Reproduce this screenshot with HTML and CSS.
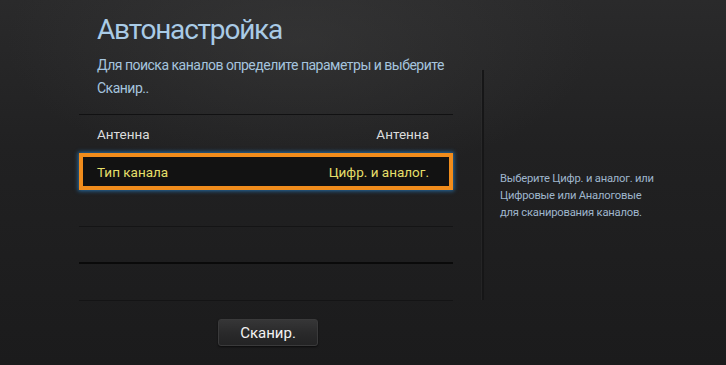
FILE: index.html
```html
<!DOCTYPE html>
<html lang="ru">
<head>
<meta charset="utf-8">
<link rel="stylesheet" href="styles.css">
</head>
<body>
<div class="screen">
  <div class="main">
    <h1 class="title">Автонастройка</h1>
    <p class="desc">Для поиска каналов определите параметры и выберите Сканир..</p>
    <div class="list">
      <div class="row row-first"><span>Антенна</span><span>Антенна</span></div>
      <div class="row row-active"><span>Тип канала</span><span>Цифр. и аналог.</span></div>
      <div class="row row-empty"></div>
      <div class="row row-empty row-dark"></div>
      <div class="row row-empty"></div>
    </div>
    <div class="actions"><button class="btn">Сканир.</button></div>
  </div>
  <div class="side">
    <p class="hint">Выберите Цифр. и аналог. или<br>Цифровые или Аналоговые<br>для сканирования каналов.</p>
  </div>
</div>
</body>
</html>
```
FILE: styles.css
```css
html, body {
  margin: 0;
  padding: 0;
}
body {
  width: 726px;
  height: 365px;
  overflow: hidden;
  font-family: Roboto, "Open Sans", sans-serif;
}
.screen {
  display: flex;
  width: 726px;
  height: 365px;
  background:
    radial-gradient(ellipse 420px 200px at 300px 40px, rgba(70,70,70,0.35), rgba(0,0,0,0) 70%),
    linear-gradient(180deg, #2a2a2b 0%, #212122 40%, #1b1b1c 100%);
}
.main {
  width: 374px;
  margin-left: 79px;
  display: flex;
  flex-direction: column;
}
.title {
  margin: 11px 0 0 18px;
  font-size: 28px;
  font-weight: 400;
  line-height: 38px;
  letter-spacing: -1.2px;
  color: #a9cbe6;
}
.desc {
  margin: 5px 0 0 18px;
  width: 356px;
  font-size: 14px;
  line-height: 23px;
  letter-spacing: -0.5px;
  color: #a5c4de;
}
.list {
  margin-top: 14px;
  border-top: 1px solid #111112;
}
.row {
  height: 37px;
  box-sizing: border-box;
  display: flex;
  justify-content: space-between;
  align-items: center;
  padding: 0 24px 0 18px;
  font-size: 13.5px;
  color: #dcdcdc;
}
.row-first {
  height: 38px;
}
.row-active {
  border: 4px solid #f08c1c;
  background: #121212;
  color: #e6df6a;
  padding: 0 20px 0 14px;
  box-shadow: 0 0 4px 1px rgba(40,140,220,0.7);
}
.row-empty {
  border-bottom: 1px solid #141415;
}
.row-dark {
  border-bottom: 2px solid #0a0a0a;
}
.actions {
  display: flex;
  justify-content: center;
  margin-top: 18px;
  padding-left: 4px;
}
.btn {
  width: 100px;
  height: 27px;
  border: 1px solid #3a3a3b;
  border-radius: 3px;
  background: linear-gradient(180deg, #363637 0%, #2a2a2b 50%, #232324 100%);
  color: #f2f2f2;
  font-family: Roboto, "Open Sans", sans-serif;
  font-size: 15px;
  padding: 0;
  box-shadow: 0 1px 2px rgba(0,0,0,0.6);
}
.side {
  margin: 70px 0 65px 29px;
  border-left: 2px solid #161617;
  box-shadow: -1px 0 0 rgba(60,60,60,0.25);
  padding-left: 16px;
  display: flex;
  align-items: center;
}
.hint {
  margin: 0 0 -20px 0;
  font-size: 11.2px;
  line-height: 17px;
  letter-spacing: -0.2px;
  color: #9fb6cc;
}
```
